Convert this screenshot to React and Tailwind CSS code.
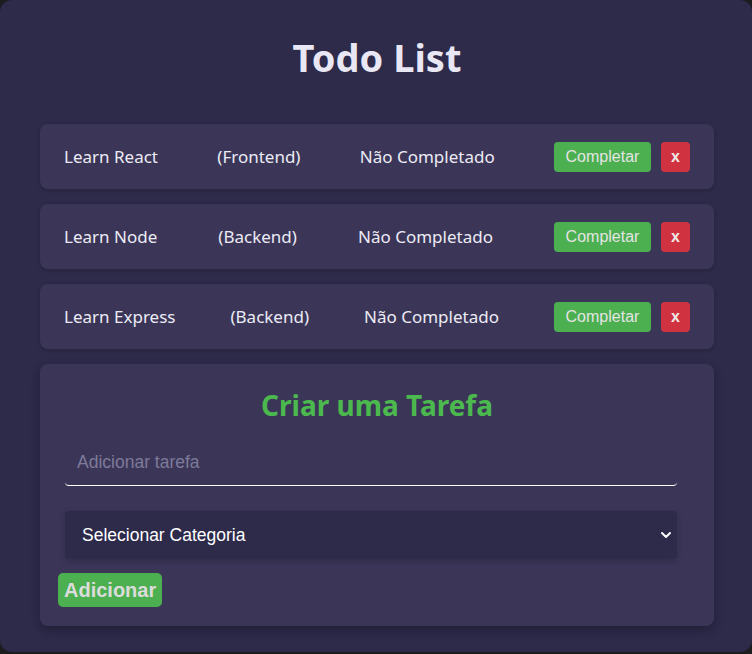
const todos = [
  { id: 1, text: 'Learn React', category: 'Frontend' },
  { id: 2, text: 'Learn Node', category: 'Backend' },
  { id: 3, text: 'Learn Express', category: 'Backend' },
]

const ui = { fontFamily: '"Noto Sans", "Open Sans", sans-serif' }
const arial = { fontFamily: '"Liberation Sans", Arial, sans-serif' }

function TodoItem({ todo }) {
  return (
    <div className="flex h-[65px] items-center justify-between rounded-lg bg-[#3b3658] px-6 text-[17px] text-[#ecebf5] shadow-[0_1px_4px_rgba(0,0,0,0.15)]">
      <span>{todo.text}</span>
      <span>({todo.category})</span>
      <span>Não Completado</span>
      <div className="flex items-center gap-[10px]" style={arial}>
        <button className="h-[30px] w-[97px] rounded bg-[#4caf50] text-[16px] text-[#e4e4e4]">
          Completar
        </button>
        <button className="h-[30px] w-[29px] rounded bg-[#d0333f] text-[16px] font-bold text-[#f0e8ea]">
          x
        </button>
      </div>
    </div>
  )
}

export default function App() {
  return (
    <div className="min-h-screen bg-[#1c1c1e]" style={ui}>
      <div className="h-[652px] rounded-xl bg-[#2d2a4a] pl-10 pr-[38px] pt-[30px]">
        {/* Header */}
        <h1 className="text-center text-[38px] font-bold leading-[54px] text-[#e9e7f4]">Todo List</h1>

        {/* List */}
        <div className="mt-[40px] flex flex-col gap-[15px]">
          {todos.map(t => (
            <TodoItem key={t.id} todo={t} />
          ))}

          {/* Form */}
          <div className="h-[262px] rounded-lg bg-[#3b3658] pt-[22px] shadow-[0_4px_10px_rgba(0,0,0,0.25)]">
            <h2 className="text-center text-[28px] font-bold leading-[38px] text-[#4cb94f]">Criar uma Tarefa</h2>
            <input
              placeholder="Adicionar tarefa"
              className="mt-[21px] ml-[25px] block h-[41px] w-[612px] rounded border-b border-white bg-transparent px-3 pb-[6px] text-[17.5px] text-white placeholder:text-[#7e7a99] outline-none"
              style={arial}
            />
            <div className="relative mt-[25px] ml-[25px] w-[612px]">
              <select
                className="block h-[48px] w-full appearance-none rounded bg-[#2d2a4a] pl-[17px] text-[17.5px] text-white shadow-[0_2px_6px_rgba(0,0,0,0.2)] outline-none"
                style={arial}
                defaultValue=""
              >
                <option value="">Selecionar Categoria</option>
                <option value="Frontend">Frontend</option>
                <option value="Backend">Backend</option>
              </select>
              <svg className="pointer-events-none absolute right-[5px] top-[18px]" width="12" height="12" viewBox="0 0 12 12" fill="none" stroke="white" strokeWidth="2">
                <path d="M2 4l4 4 4-4" strokeLinecap="round" strokeLinejoin="round" />
              </svg>
            </div>
            <button
              className="mt-[14px] ml-[18px] h-[34px] rounded-[5px] bg-[#4caf50] px-[6px] text-[20px] font-bold text-[#dcdcdc]"
              style={arial}
            >
              Adicionar
            </button>
          </div>
        </div>
      </div>
    </div>
  )
}
